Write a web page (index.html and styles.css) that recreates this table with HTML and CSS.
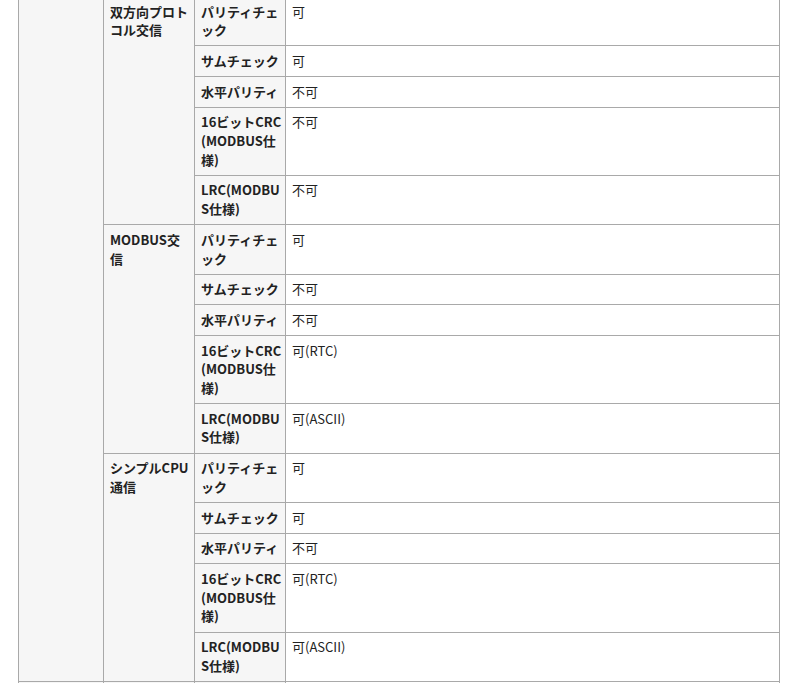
FILE: index.html
```html
<!DOCTYPE html>
<html lang="ja">
<head>
<meta charset="utf-8">
<link rel="stylesheet" href="styles.css">
</head>
<body>
<table class="spec">
  <colgroup>
    <col class="c1"><col class="c2"><col class="c3"><col class="c4">
  </colgroup>
  <tbody>
    <tr>
      <th rowspan="15" class="group"></th>
      <th rowspan="5">双方向プロトコル交信</th>
      <th>パリティチェック</th>
      <td>可</td>
    </tr>
    <tr><th>サムチェック</th><td>可</td></tr>
    <tr><th>水平パリティ</th><td>不可</td></tr>
    <tr><th>16ビットCRC(MODBUS仕様)</th><td>不可</td></tr>
    <tr><th>LRC(MODBUS仕様)</th><td>不可</td></tr>
    <tr>
      <th rowspan="5">MODBUS交信</th>
      <th>パリティチェック</th>
      <td>可</td>
    </tr>
    <tr><th>サムチェック</th><td>不可</td></tr>
    <tr><th>水平パリティ</th><td>不可</td></tr>
    <tr><th>16ビットCRC(MODBUS仕様)</th><td>可(RTC)</td></tr>
    <tr><th>LRC(MODBUS仕様)</th><td>可(ASCII)</td></tr>
    <tr>
      <th rowspan="5">シンプルCPU通信</th>
      <th>パリティチェック</th>
      <td>可</td>
    </tr>
    <tr><th>サムチェック</th><td>可</td></tr>
    <tr><th>水平パリティ</th><td>不可</td></tr>
    <tr><th>16ビットCRC(MODBUS仕様)</th><td>可(RTC)</td></tr>
    <tr><th>LRC(MODBUS仕様)</th><td>可(ASCII)</td></tr>
    <tr class="next">
      <th class="group"></th>
      <th></th>
      <th></th>
      <td></td>
    </tr>
  </tbody>
</table>
</body>
</html>
```
FILE: styles.css
```css
html, body {
  margin: 0;
  padding: 0;
  background: #ffffff;
}

body {
  font-family: "Noto Sans CJK JP", "Noto Sans", sans-serif;
  font-size: 13px;
  color: #222222;
}

.spec {
  border-collapse: collapse;
  table-layout: fixed;
  width: 762px;
  margin: -4px 0 0 18px;
  line-height: 18.7px;
}

.c1 { width: 85px; }
.c2 { width: 91px; }
.c3 { width: 91px; }
.c4 { width: auto; }

.spec th,
.spec td {
  border: 1px solid #a9a9a9;
  padding: 5.5px 3px 5.5px 6px;
  vertical-align: top;
  text-align: left;
  word-break: break-all;
}

.spec th {
  background: #f6f6f6;
  font-weight: bold;
}

.spec td {
  background: #ffffff;
  font-weight: normal;
}

.spec .next th,
.spec .next td {
  height: 40px;
}
```
